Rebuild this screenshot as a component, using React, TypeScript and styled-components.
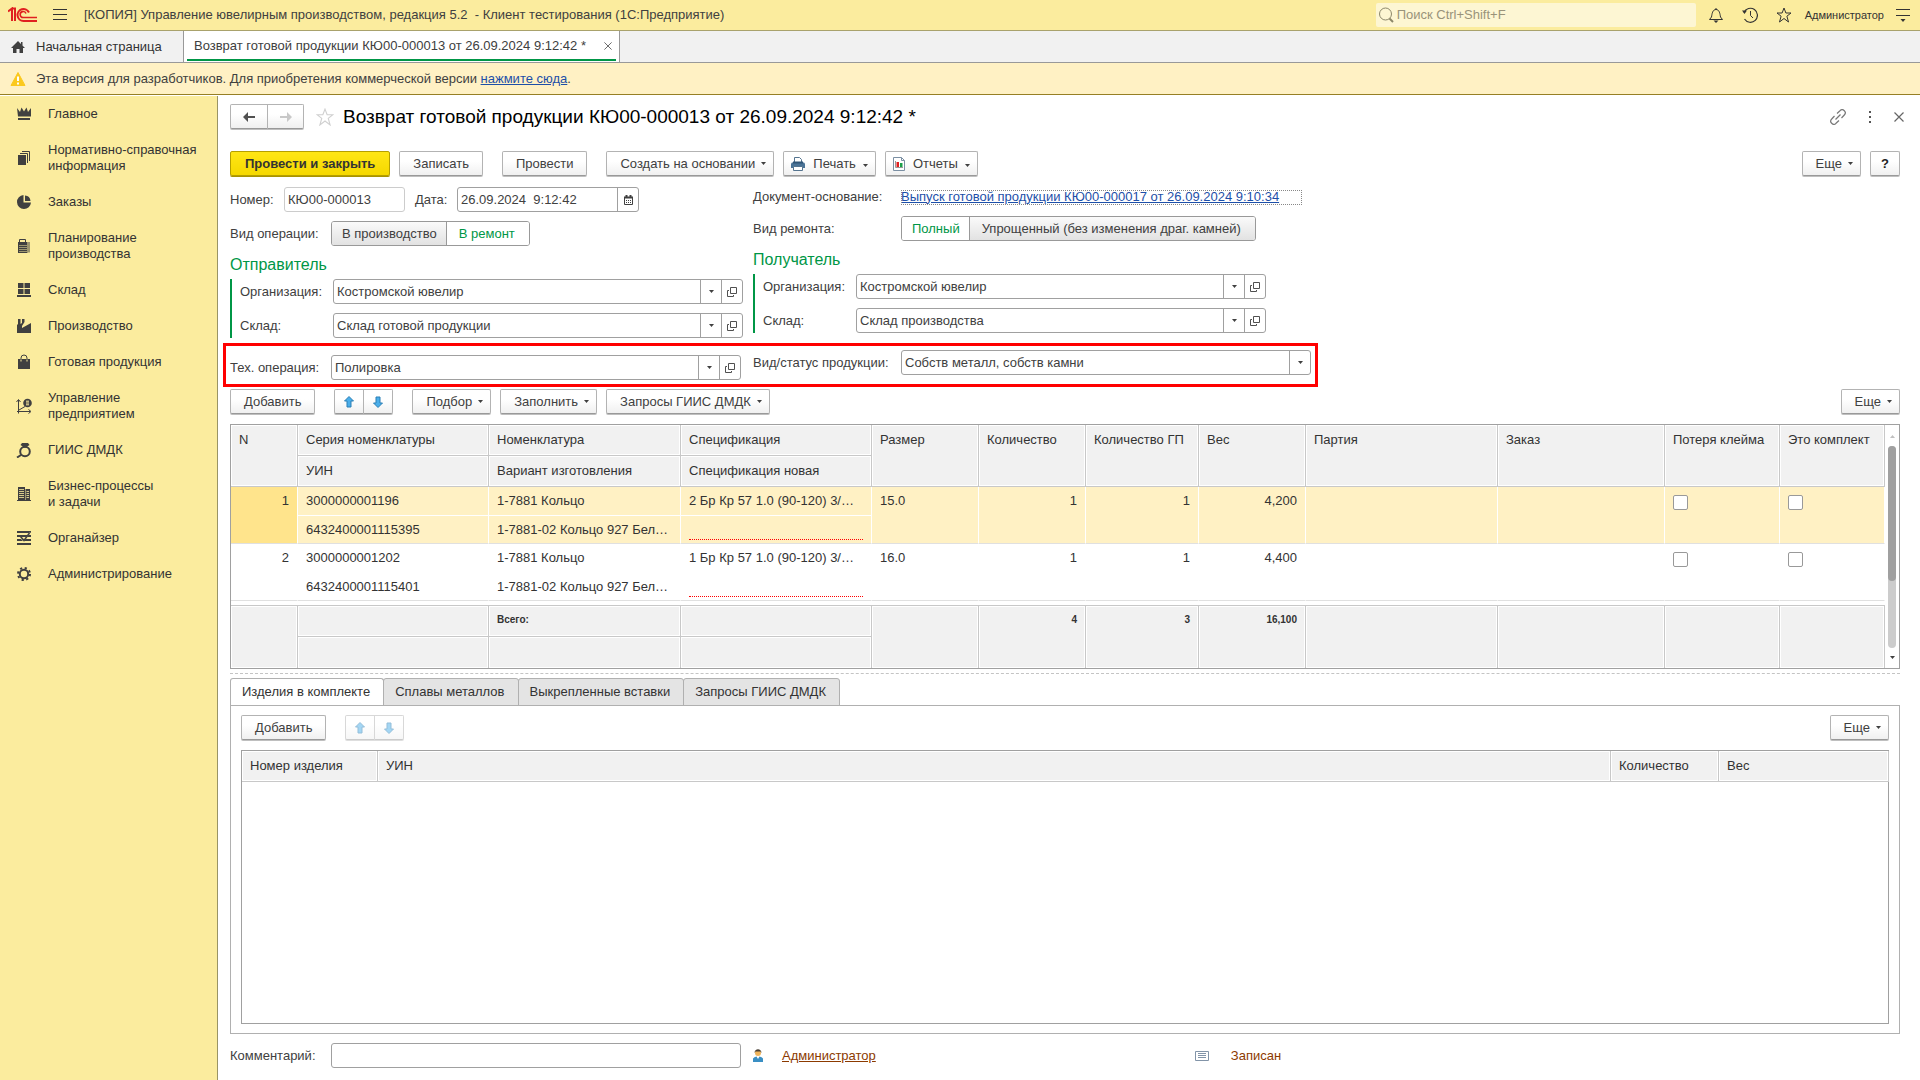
import React from "react";
import styled, { createGlobalStyle, css } from "styled-components";

const GlobalStyle = createGlobalStyle`
  *, *::before, *::after { box-sizing: border-box; }
  body { margin: 0; background: #fff; }
  body, button, input, select {
    font-family: "Liberation Sans", Arial, sans-serif;
    font-size: 13px;
    line-height: 16px;
    color: #404040;
  }
  button { cursor: pointer; }
  svg { display: block; flex: none; }
`;

/* ---------- icons ---------- */

const Logo = () => (
  <svg width="30" height="16" viewBox="0 0 30 16" fill="none" stroke="#e02020" strokeWidth="2">
    <path d="M0 4.500 4 1.500V14M3.500 1.500H7V14" />
    <path d="M21 5.500A6 6 0 1 0 15.500 14H29" />
    <path d="M18 6.500A3 3 0 1 0 15.500 10.500H29" strokeWidth="1.600" />
  </svg>
);

const BurgerIcon = () => (
  <svg width="16" height="14" viewBox="0 0 16 14" stroke="#333" strokeWidth="1">
    <path d="M1 1.500H15M1 6.500H15M1 11.500H15" />
  </svg>
);

const HomeIcon = () => (
  <svg width="16" height="14" viewBox="0 0 16 14" fill="#404040">
    <path d="M8 1 1 8h2v5h3.500V9h3v4H13V8h2L12.500 5.500V2H11v2Z" />
  </svg>
);

const WarningIcon = () => (
  <svg width="16" height="16" viewBox="0 0 16 16">
    <path d="M8 1.500 15 14.500H1Z" fill="#fbc91e" stroke="#fbc91e" strokeLinejoin="round" />
    <path d="M8 5.500V10M8 11.500V13.500" stroke="#fff" strokeWidth="2" />
  </svg>
);

const SearchIcon = () => (
  <svg width="16" height="16" viewBox="0 0 16 16" fill="none" stroke="#8c876a">
    <circle cx="7.500" cy="7" r="6" />
    <path d="M11.500 11.500 15 15" strokeWidth="2" />
  </svg>
);

const BellIcon = () => (
  <svg width="16" height="16" viewBox="0 0 16 16" fill="none" stroke="#333">
    <path d="M1.500 12.500H14.500L12.500 10C12 7 11.500 2.500 8 2.500S4 7 3.500 10Z" />
    <path d="M8 2.500V1" />
    <path d="M5.500 13.500h5L8 16Z" fill="#333" stroke="none" />
  </svg>
);

const HistoryIcon = () => (
  <svg width="16" height="16" viewBox="0 0 16 16" fill="none" stroke="#333">
    <path d="M2 5.500A7 7 0 1 1 2.500 12" strokeWidth="1.200" />
    <path d="M8.500 4V8.500L11 11" />
    <path d="M0 3.500h5L2.500 7Z" fill="#333" stroke="none" />
  </svg>
);

const StarIcon = ({ size = 16, color = "#333" }: { size?: number; color?: string }) => (
  <svg width={size} height={size} viewBox="0 0 16 16" fill="none" stroke={color}>
    <path d="M8 1 9.900 6H15l-4.100 3.200L12.500 15 8 11.500 3.500 15l1.600-5.800L1 6h5.100Z" />
  </svg>
);

const SettingsIcon = () => (
  <svg width="14" height="14" viewBox="0 0 14 14" fill="none" stroke="#333">
    <path d="M0 1.500H14M0 7.500H14" />
    <path d="M4.500 11h5L7 14Z" fill="#333" stroke="none" />
  </svg>
);

const LinkIcon = () => (
  <svg width="16" height="16" viewBox="0 0 16 16" fill="none" stroke="#777" strokeWidth="1.200">
    <path d="M7 4.500 10 1.700A2.900 2.900 0 0 1 14.300 6L11.500 9M9 11.500 6 14.300A2.900 2.900 0 0 1 1.700 10L4.500 7M5.500 10.500l5-5" />
  </svg>
);

const DotsIcon = () => (
  <svg width="4" height="12" viewBox="0 0 4 12" fill="#555">
    <path d="M1 0h2v2H1zM1 5h2v2H1zM1 10h2v2H1z" />
  </svg>
);

const CrossIcon = ({ size = 10 }: { size?: number }) => (
  <svg width={size} height={size} viewBox="0 0 10 10" stroke="#666" strokeWidth="1.200">
    <path d="M0.500 0.500 9.500 9.500M9.500 0.500 0.500 9.500" />
  </svg>
);

const BackIcon = ({ forward }: { forward?: boolean }) => (
  <svg width="14" height="12" viewBox="0 0 14 12" fill={forward ? "#c8c8c8" : "#505050"}>
    <path d={forward ? "M13 6 8 1v4H1v2h7v4Z" : "M1 6 6 1v4h7v2H6v4Z"} />
  </svg>
);

const Caret = ({ color = "#404040" }: { color?: string }) => (
  <svg width="5" height="3" viewBox="0 0 5 3" fill={color}>
    <path d="M0 0h5L2.500 3Z" />
  </svg>
);

const OpenIcon = () => (
  <svg width="10" height="10" viewBox="0 0 10 10" fill="none" stroke="#505050">
    <path d="M3.500 0.500h6v6h-6zM2 3.500H0.500v6h6V8" />
  </svg>
);

const CalendarIcon = () => (
  <svg width="9" height="10" viewBox="0 0 9 10" fill="none" stroke="#404040">
    <path d="M0.500 2V9.500H8.500V2" />
    <path d="M0 2.500H9M2.500 0V2M6.500 0V2" strokeWidth="2" />
    <path d="M2 5.500H7.500M2 7.500H7.500" strokeDasharray="1 1" />
  </svg>
);

const PrinterIcon = () => (
  <svg width="16" height="16" viewBox="0 0 16 16">
    <path d="M4.500 7V1.500h5l2 2V7" fill="#fff" stroke="#55748f" />
    <path d="M1 7.500 2 6.500h12l1 1v4.500H1Z" fill="#4a7396" />
    <path d="M3 5.500h10v2H3Z" fill="#2f5576" />
    <path d="M3.500 10.500h9v4h-9Z" fill="#fff" stroke="#55748f" />
  </svg>
);

const ReportIcon = () => (
  <svg width="14" height="16" viewBox="0 0 14 16">
    <path d="M1.500 1.500h8l3 3v10h-11Z" fill="#fff" stroke="#7b8fa3" />
    <path d="M9.500 1.500v3h3" fill="none" stroke="#7b8fa3" />
    <path d="M3.500 5v6.500h7.500" fill="none" stroke="#999" />
    <path d="M4.500 6h2.500v5H4.500z" fill="#e02020" />
    <path d="M8 7h2.500v4H8z" fill="#1ca04a" />
  </svg>
);

const MoveIcon = ({ down }: { down?: boolean }) => (
  <svg width="12" height="14" viewBox="0 0 12 14" fill="#4aaeea" stroke="#2b7fb5">
    <path d={down ? "M6 12.500 1.500 8h2.500v-6h4v6h2.500Z" : "M6 1.500 10.500 6H8v6H4v-6H1.500Z"} />
  </svg>
);

const PersonIcon = () => (
  <svg width="10" height="13" viewBox="0 0 10 13">
    <circle cx="5" cy="4" r="3" fill="#efb45c" />
    <path d="M1.500 4C1.500-1 8.500-1 8.500 4L7.500 2.500h-5Z" fill="#4a4034" />
    <path d="M0 13V9.500Q1 8 3.500 7.500L5 10l1.500-2.500Q9 8 10 9.500V13Z" fill="#3a8fc4" />
  </svg>
);

const StatusIcon = () => (
  <svg width="14" height="10" viewBox="0 0 14 10" fill="#fff" stroke="#8294a8">
    <path d="M0.500 0.500h13v9h-13z" />
    <path d="M3 2.500h8M3 4.500h8M3 6.500h8" />
  </svg>
);

const menuIcons: Record<string, React.ReactNode> = {
  crown: <path d="M1 2 4 6 5.500 1.500 8 5.500 10.500 1.500 12 6 15 2V10.500H2ZM2 12h12v2H2Z" />,
  books: (
    <>
      <path d="M2 5h8v10H2Z" />
      <path d="M4 3.500h7.500V13M6 1.500h7.500V11" fill="none" stroke="#404040" />
    </>
  ),
  pie: <path d="M7.500 1V8.500H15A7 7 0 1 1 7.500 1ZM9 1.500A6 6 0 0 1 14.500 7H9Z" />,
  calc: (
    <>
      <path d="M3.500 5V1.500h6V5" fill="none" stroke="#404040" />
      <path d="M2 4h9.500v11H2Z" />
      <path d="M3.500 7.500h7M3.500 9.500h7M3.500 11.500h7M3.500 13.500h7" stroke="#fbec9f" strokeDasharray="1 1" />
      <path d="M13 4v10.500" stroke="#404040" />
    </>
  ),
  boxes: <path d="M2 1h5.500v5H2ZM8.500 1H14v5H8.500ZM2 7h5.500v5H2ZM8.500 7H14v5H8.500ZM1 13h14v2H1Z" />,
  factory: <path d="M1 15V7L2 6V1h2.500v5L6 5V1h2.500v3L6 8v2l9-5v10Z" />,
  bag: (
    <>
      <path d="M2 5h12v10H2Z" />
      <path d="M5 8V4a3 3 0 0 1 6 0v4" fill="none" stroke="#404040" />
      <path d="M5 5.500v2M11 5.500v2" stroke="#fbec9f" />
    </>
  ),
  chart: (
    <>
      <path d="M2.500 15.500V2M1 13.500H14M0.500 4 2.500 1.500 4.500 4M12.500 11.500 15 13.500 12.500 15.500M3 12 9 8.500" fill="none" stroke="#404040" />
      <circle cx="11.500" cy="5" r="4.300" />
      <path d="M10 3.200h3M10 5h3M10 6.800h3" stroke="#fbec9f" />
    </>
  ),
  ring: (
    <>
      <circle cx="9" cy="9.500" r="4.800" fill="none" stroke="#404040" strokeWidth="2" />
      <path d="M6 1h6l1.500 2-4.500 3-4.500-3Z" />
      <path d="M5 13 1 15.500" stroke="#404040" strokeWidth="2" />
    </>
  ),
  building: (
    <>
      <path d="M2 1h7v14H2ZM9.500 3H14v12H9.500ZM1 14h14v1H1Z" />
      <path d="M3 3.500h5M3 5.500h5M3 7.500h5M3 9.500h5M3 11.500h5M10.500 5.500h2.500M10.500 7.500h2.500M10.500 9.500h2.500M10.500 11.500h2.500" stroke="#fbec9f" strokeWidth="0.800" />
    </>
  ),
  organizer: (
    <>
      <path d="M1 1h14v2H1ZM1 5h14v2H1ZM1 9h14v2H1ZM1 13h14v2H1Z" />
      <path d="M4 7.500 7.500 11 14 2.500" fill="none" stroke="#fbec9f" />
      <path d="M4.500 6.500 8 10.500 13.500 3" fill="none" stroke="#404040" strokeWidth="1.500" />
    </>
  ),
  gear: (
    <>
      <circle cx="8" cy="8" r="4.200" fill="none" stroke="#404040" strokeWidth="2" />
      <circle cx="8" cy="8" r="6" fill="none" stroke="#404040" strokeWidth="2" strokeDasharray="2.200 2.510" />
    </>
  ),
};

/* ---------- shell ---------- */

const Shell = styled.div`
  display: flex;
  flex-direction: column;
  min-height: 100vh;
  background: #fff;
`;

const TopBar = styled.header`
  display: flex;
  align-items: center;
  height: 31px;
  padding: 0 10px 0 8px;
  background: #fbec9e;
  border-bottom: 1px solid #a9a26c;
`;

const PlainButton = styled.button`
  display: flex;
  align-items: center;
  justify-content: center;
  padding: 0;
  border: 0;
  background: none;
  color: #333;
`;

const BurgerButton = styled(PlainButton)`
  margin: 0 16px 0 14px;
`;

const AppTitle = styled.div`
  flex: 1;
  white-space: pre;
  color: #404040;
`;

const SearchBox = styled.label`
  display: flex;
  align-items: center;
  gap: 3px;
  width: 320px;
  height: 24px;
  padding-left: 2px;
  margin-right: 12px;
  background: #fdf6d3;
  border-radius: 2px;
`;

const SearchInput = styled.input`
  flex: 1;
  min-width: 0;
  border: 0;
  padding: 0;
  outline: 0;
  background: none;
  &::placeholder { color: #99937a; opacity: 1; }
`;

const TopIcons = styled.div`
  display: flex;
  gap: 18px;
  margin-right: 13px;
`;

const UserButton = styled(PlainButton)`
  font-size: 11px;
  margin-right: 12px;
`;

const TabBar = styled.nav`
  display: flex;
  height: 32px;
  background: #f1f1f1;
  border-bottom: 1px solid #999;
`;

const HomeTab = styled.a`
  display: flex;
  align-items: center;
  gap: 10px;
  width: 184px;
  padding-left: 10px;
  border-right: 1px solid #999;
  color: #333;
  text-decoration: none;
`;

const OpenTab = styled.div`
  display: flex;
  width: 436px;
  padding: 0 3px 1px 3px;
  border-right: 1px solid #999;
  background: #fff;
`;

const OpenTabInner = styled.div`
  display: flex;
  flex: 1;
  align-items: center;
  justify-content: space-between;
  padding: 2px 4px 0 7px;
  border-bottom: 2px solid #009646;
`;

const Notice = styled.div`
  display: flex;
  align-items: center;
  gap: 10px;
  height: 32px;
  padding-left: 10px;
  background: #fff1c4;
  border-bottom: 1px solid #967f24;
`;

const Link = styled.a`
  color: #1d4fa8;
`;

const Body = styled.div`
  display: flex;
  flex: 1;
  padding-top: 1px;
`;

const Sidebar = styled.nav`
  width: 218px;
  flex: none;
  background: #fbec9e;
  border-right: 1px solid #999465;
`;

const SidebarItem = styled.a`
  display: flex;
  align-items: center;
  gap: 16px;
  padding: 10px 8px 10px 16px;
  color: #333;
  text-decoration: none;
  white-space: pre-line;
`;

const Main = styled.main`
  display: flex;
  flex-direction: column;
  flex: 1;
  min-width: 0;
  padding: 9px 20px 12px 12px;
`;

/* ---------- buttons ---------- */

const Row = styled.div`
  display: flex;
  align-items: center;
  gap: 9px;
`;

const Spacer = styled.div`
  flex: 1;
`;

const Group = styled.div`
  display: flex;
  gap: 9px;
  margin-left: 10px;
`;

const raised = css`
  border: 1px solid #b3b3b3;
  border-bottom-color: #999;
  background: linear-gradient(#fff 40%, #f0f0f0);
  box-shadow: 0 1px 0 #bfbfbf;
`;

const Button = styled.button<{ $primary?: boolean; $menu?: boolean; $icon?: boolean }>`
  ${raised}
  display: flex;
  align-items: center;
  justify-content: center;
  gap: ${(p) => (p.$icon ? 7 : 6)}px;
  height: 25px;
  margin-bottom: 1px;
  padding: 0 ${(p) => (p.$menu ? 7 : 13)}px 0 ${(p) => (p.$icon ? 6 : 13)}px;
  border-radius: 2px;
  white-space: nowrap;
  ${(p) =>
    p.$primary &&
    css`
      padding: 0 14px;
      border-color: #b59f00;
      background: linear-gradient(#ffe615, #f5d800);
      box-shadow: 0 1px 0 #a89300;
      font-weight: bold;
      color: #333;
    `}
  & > svg:last-child:not(:only-child) { margin-top: 3px; }
`;

const HelpButton = styled(Button)`
  width: 30px;
  padding: 0;
  font-weight: bold;
  color: #222;
`;

const PairButton = styled.button<{ $width: number }>`
  ${raised}
  display: flex;
  align-items: center;
  justify-content: center;
  width: ${(p) => p.$width}px;
  height: 25px;
  margin-bottom: 1px;
  padding: 0;
  &:first-child { border-radius: 2px 0 0 2px; }
  &:last-child { border-radius: 0 2px 2px 0; }
  &:not(:first-child) { margin-left: -1px; }
`;

const Pair = styled.div<{ $faded?: boolean }>`
  display: flex;
  margin-left: 10px;
  opacity: ${(p) => (p.$faded ? 0.5 : 1)};
`;

const HeaderPair = styled.div`
  display: flex;
  margin-right: 3px;
`;

const HeaderRow = styled(Row)`
  height: 24px;
`;

const Title = styled.h1`
  margin: 0;
  font-size: 19px;
  line-height: 24px;
  font-weight: normal;
  color: #000;
`;

const WindowTools = styled.div`
  display: flex;
  align-items: center;
  gap: 22px;
  margin-right: -4px;
`;

const CommandBar = styled(Row)`
  margin: 22px 0 10px;
`;

/* ---------- form ---------- */

const FormArea = styled.div`
  position: relative;
  display: flex;
  align-items: flex-start;
  gap: 10px;
  width: fit-content;
`;

const Highlight = styled.div`
  position: absolute;
  left: -7px;
  right: -7px;
  bottom: -7px;
  height: 44px;
  border: 3px solid #f00;
  pointer-events: none;
`;

const Column = styled.div<{ $width: number }>`
  display: flex;
  flex-direction: column;
  width: ${(p) => p.$width}px;
`;

const FieldRow = styled.div<{ $height?: number }>`
  display: flex;
  align-items: center;
  height: ${(p) => p.$height ?? 25}px;
  & + & { margin-top: 9px; }
`;

const Label = styled.label<{ $width: number; $after?: boolean }>`
  width: ${(p) => p.$width}px;
  margin-left: ${(p) => (p.$after ? 10 : 0)}px;
  flex: none;
  white-space: nowrap;
`;

const Caption = styled.span<{ $width: number }>`
  width: ${(p) => p.$width}px;
  flex: none;
  white-space: nowrap;
`;

const Box = styled.div<{ $width?: number; $muted?: boolean }>`
  display: flex;
  ${(p) => (p.$width ? `width: ${p.$width}px;` : "flex: 1;")}
  height: 25px;
  border: 1px solid ${(p) => (p.$muted ? "#ccc" : "#a0a0a0")};
  border-radius: 3px;
  background: #fff;
`;

const BoxInput = styled.input`
  flex: 1;
  min-width: 0;
  padding: 0 4px 0 3px;
  border: 0;
  outline: 0;
  background: none;
`;

const BoxButton = styled.button`
  display: flex;
  align-items: center;
  justify-content: center;
  width: 21px;
  padding: 0;
  border: 0;
  border-left: 1px solid #a0a0a0;
  background: none;
`;

const SelectWrap = styled.div`
  flex: 1;
  display: grid;
  & > * { grid-area: 1 / 1; }
`;

const Select = styled.select`
  appearance: none;
  min-width: 0;
  border: 0;
  outline: 0;
  padding: 0 24px 0 3px;
  background: none;
`;

const SelectCaret = styled.span`
  display: flex;
  align-items: center;
  justify-content: center;
  justify-self: end;
  width: 21px;
  border-left: 1px solid #a0a0a0;
  pointer-events: none;
`;

const Segments = styled.div`
  display: flex;
  height: 25px;
  border: 1px solid #999;
  border-radius: 3px;
  overflow: hidden;
`;

const Segment = styled.label`
  position: relative;
  display: flex;
  align-items: center;
  padding: 0 9px 0 10px;
  background: linear-gradient(#fafafa, #e2e2e2);
  &:has(input:checked) { background: #fff; color: #009646; }
  & + & {
    padding: 0 14px 0 12px;
    border-left: 1px solid #999;
  }
`;

const SegmentRadio = styled.input`
  position: absolute;
  inset: 0;
  margin: 0;
  opacity: 0;
`;

const GroupTitle = styled.h2`
  margin: 0;
  padding-top: 4px;
  height: 33px;
  font-size: 16px;
  line-height: 29px;
  font-weight: normal;
  color: #009646;
`;

const Party = styled.div`
  margin-bottom: 17px;
  padding-left: 8px;
  border-left: 2px solid #009646;
`;

const DocLink = styled(Link)`
  width: 401px;
  height: 15px;
  line-height: 14px;
  outline: 1px dotted #888;
  outline-offset: -1px;
`;

const ListBar = styled(Row)`
  margin: 9px 0;
`;

/* ---------- tables ---------- */

const TableFrame = styled.div`
  display: flex;
  border: 1px solid #a0a0a0;
`;

const Table = styled.table`
  flex: 1;
  width: 100%;
  table-layout: fixed;
  border-collapse: separate;
  border-spacing: 0;
  color: #333;
`;

const HeadCell = styled.th`
  height: 31px;
  padding: 0 8px;
  vertical-align: top;
  text-align: left;
  font-weight: normal;
  line-height: 29px;
  white-space: nowrap;
  background: #f1f1f1;
  border-right: 1px solid #c8c8c8;
  border-bottom: 1px solid #c8c8c8;
  box-shadow: inset 0 0 0 1px #fff;
`;

const Cell = styled.td<{ $active?: boolean; $key?: boolean; $right?: boolean; $first?: boolean }>`
  height: ${(p) => (p.$first ? 29 : 28)}px;
  padding: 1px 8px 0;
  vertical-align: top;
  overflow: hidden;
  text-overflow: ellipsis;
  white-space: nowrap;
  line-height: 26px;
  text-align: ${(p) => (p.$right ? "right" : "left")};
  background: ${(p) => (p.$active ? (p.$key ? "#ffe48c" : "#fff1c4") : "#fff")};
  border-right: 1px solid #fff;
  border-bottom: 1px solid ${(p) => (p.$first ? "#fff" : "#e0e0e0")};
`;

const GapCell = styled.td`
  height: 5px;
  padding: 0;
  border-bottom: 1px solid #c8c8c8;
`;

const FootCell = styled(HeadCell).attrs({ as: "td" })<{ $right?: boolean }>`
  font-size: 10px;
  font-weight: bold;
  line-height: 27px;
  text-align: ${(p) => (p.$right ? "right" : "left")};
  tr:last-child > &, &[rowspan] { border-bottom: 0; }
`;

const Required = styled.div`
  height: 23px;
  border-bottom: 1px dotted #f00;
`;

const Check = styled.input`
  display: block;
  appearance: none;
  width: 15px;
  height: 15px;
  margin: 7px 0 0;
  border: 1px solid #999;
  border-radius: 2px;
  background: #fff;
`;

const ScrollBar = styled.div`
  display: flex;
  flex-direction: column;
  align-items: center;
  width: 14px;
  padding: 10px 0 9px;
  gap: 8px;
`;

const ScrollTrack = styled.div`
  flex: 1;
  width: 8px;
  border-radius: 4px;
  background: #ccc;
`;

const ScrollThumb = styled.div`
  height: 67%;
  border-radius: 4px;
  background: #a0a0a0;
`;

const FlipUp = styled.span`
  transform: rotate(180deg);
`;

const Splitter = styled.div`
  margin: 4px 0;
  border-top: 1px dashed #c4c4c4;
`;

const Tabs = styled.div`
  display: flex;
  height: 28px;
  margin-bottom: -1px;
`;

const Tab = styled.button<{ $active?: boolean }>`
  padding: 0 13px 0 11px;
  border: 1px solid #b0b0b0;
  border-radius: 3px 3px 0 0;
  background: #e4e4e4;
  color: #333;
  & + & { margin-left: -1px; }
  ${(p) =>
    p.$active &&
    css`
      background: #fff;
      border-bottom-color: #fff;
    `}
`;

const TabPanel = styled.section`
  display: flex;
  flex-direction: column;
  flex: 1;
  padding: 9px 10px 9px;
  border: 1px solid #b0b0b0;
`;

const PanelFrame = styled(TableFrame)`
  flex: 1;
  align-items: flex-start;
  margin-top: 9px;
`;

const Footer = styled.footer`
  display: flex;
  align-items: center;
  margin-top: 9px;
`;

const FooterItem = styled.div<{ $gap: number; $left: number }>`
  display: flex;
  align-items: center;
  gap: ${(p) => p.$gap}px;
  margin-left: ${(p) => p.$left}px;
  color: #8c3a00;
`;

const UserLink = styled.a`
  color: #8c3a00;
`;

/* ---------- data ---------- */

const menu: [string, string][] = [
  ["crown", "Главное"],
  ["books", "Нормативно-справочная\nинформация"],
  ["pie", "Заказы"],
  ["calc", "Планирование\nпроизводства"],
  ["boxes", "Склад"],
  ["factory", "Производство"],
  ["bag", "Готовая продукция"],
  ["chart", "Управление\nпредприятием"],
  ["ring", "ГИИС ДМДК"],
  ["building", "Бизнес-процессы\nи задачи"],
  ["organizer", "Органайзер"],
  ["gear", "Администрирование"],
];

const columns = [67, 191, 192, 191, 107, 107, 113, 107, 192, 167, 115, 105];
const kitColumns = [136, 1233, 108, 170];

const items = [
  { n: 1, series: "3000000001196", uin: "6432400001115395", spec: "2 Бр Кр 57 1.0 (90-120) 3/…", size: "15.0", weight: "4,200", active: true },
  { n: 2, series: "3000000001202", uin: "6432400001115401", spec: "1 Бр Кр 57 1.0 (90-120) 3/…", size: "16.0", weight: "4,400", active: false },
];

/* ---------- composed parts ---------- */

const MenuButton = ({ icon, children }: { icon?: React.ReactNode; children: React.ReactNode }) => (
  <Button type="button" $menu $icon={!!icon}>
    {icon}
    {children}
    <Caret />
  </Button>
);

const MoveButtons = ({ faded }: { faded?: boolean }) => (
  <Pair $faded={faded}>
    <PairButton type="button" $width={30} aria-label="Переместить вверх" disabled={faded}>
      <MoveIcon />
    </PairButton>
    <PairButton type="button" $width={30} aria-label="Переместить вниз" disabled={faded}>
      <MoveIcon down />
    </PairButton>
  </Pair>
);

const SelectField = ({ id, value, open = true, width }: { id: string; value: string; open?: boolean; width?: number }) => (
  <Box $width={width}>
    <SelectWrap>
      <Select id={id} defaultValue={value}>
        <option>{value}</option>
      </Select>
      <SelectCaret>
        <Caret />
      </SelectCaret>
    </SelectWrap>
    {open && (
      <BoxButton type="button" aria-label="Открыть">
        <OpenIcon />
      </BoxButton>
    )}
  </Box>
);

const SegmentedField = ({ name, options, selected }: { name: string; options: string[]; selected: string }) => (
  <Segments role="radiogroup">
    {options.map((o) => (
      <Segment key={o}>
        <SegmentRadio type="radio" name={name} defaultChecked={o === selected} />
        {o}
      </Segment>
    ))}
  </Segments>
);

const PartyFields = ({ id, store }: { id: string; store: string }) => (
  <Party>
    <FieldRow>
      <Label $width={93} htmlFor={`${id}-org`}>Организация:</Label>
      <SelectField id={`${id}-org`} value="Костромской ювелир" width={410} />
    </FieldRow>
    <FieldRow>
      <Label $width={93} htmlFor={`${id}-store`}>Склад:</Label>
      <SelectField id={`${id}-store`} value={store} width={410} />
    </FieldRow>
  </Party>
);

const ItemsTable = () => (
  <TableFrame>
    <Table>
      <colgroup>
        {columns.map((w, i) => (
          <col key={i} style={{ width: w }} />
        ))}
      </colgroup>
      <thead>
        <tr>
          <HeadCell rowSpan={2}>N</HeadCell>
          <HeadCell>Серия номенклатуры</HeadCell>
          <HeadCell>Номенклатура</HeadCell>
          <HeadCell>Спецификация</HeadCell>
          {["Размер", "Количество", "Количество ГП", "Вес", "Партия", "Заказ", "Потеря клейма", "Это комплект"].map((t) => (
            <HeadCell key={t} rowSpan={2}>{t}</HeadCell>
          ))}
        </tr>
        <tr>
          <HeadCell>УИН</HeadCell>
          <HeadCell>Вариант изготовления</HeadCell>
          <HeadCell>Спецификация новая</HeadCell>
        </tr>
      </thead>
      <tbody>
        {items.map((r) => (
          <React.Fragment key={r.n}>
            <tr>
              <Cell rowSpan={2} $active={r.active} $key $right>{r.n}</Cell>
              <Cell $first $active={r.active}>{r.series}</Cell>
              <Cell $first $active={r.active}>1-7881 Кольцо</Cell>
              <Cell $first $active={r.active}>{r.spec}</Cell>
              <Cell rowSpan={2} $active={r.active}>{r.size}</Cell>
              <Cell rowSpan={2} $active={r.active} $right>1</Cell>
              <Cell rowSpan={2} $active={r.active} $right>1</Cell>
              <Cell rowSpan={2} $active={r.active} $right>{r.weight}</Cell>
              <Cell rowSpan={2} $active={r.active} />
              <Cell rowSpan={2} $active={r.active} />
              <Cell rowSpan={2} $active={r.active}>
                <Check type="checkbox" aria-label="Потеря клейма" />
              </Cell>
              <Cell rowSpan={2} $active={r.active}>
                <Check type="checkbox" aria-label="Это комплект" />
              </Cell>
            </tr>
            <tr>
              <Cell $active={r.active}>{r.uin}</Cell>
              <Cell $active={r.active}>1-7881-02 Кольцо 927 Бел…</Cell>
              <Cell $active={r.active}>
                <Required />
              </Cell>
            </tr>
          </React.Fragment>
        ))}
        <tr>
          <GapCell colSpan={12} />
        </tr>
      </tbody>
      <tfoot>
        <tr>
          <FootCell rowSpan={2} />
          <FootCell />
          <FootCell>Всего:</FootCell>
          <FootCell />
          <FootCell rowSpan={2} />
          <FootCell rowSpan={2} $right>4</FootCell>
          <FootCell rowSpan={2} $right>3</FootCell>
          <FootCell rowSpan={2} $right>16,100</FootCell>
          <FootCell rowSpan={2} />
          <FootCell rowSpan={2} />
          <FootCell rowSpan={2} />
          <FootCell rowSpan={2} />
        </tr>
        <tr>
          <FootCell />
          <FootCell />
          <FootCell />
        </tr>
      </tfoot>
    </Table>
    <ScrollBar>
      <FlipUp>
        <Caret color="#c0c0c0" />
      </FlipUp>
      <ScrollTrack>
        <ScrollThumb />
      </ScrollTrack>
      <Caret />
    </ScrollBar>
  </TableFrame>
);

export default function App() {
  return (
    <Shell>
      <GlobalStyle />
      <TopBar>
        <Logo />
        <BurgerButton type="button" aria-label="Меню">
          <BurgerIcon />
        </BurgerButton>
        <AppTitle>{"[КОПИЯ] Управление ювелирным производством, редакция 5.2  - Клиент тестирования (1С:Предприятие)"}</AppTitle>
        <SearchBox>
          <SearchIcon />
          <SearchInput type="search" placeholder="Поиск Ctrl+Shift+F" />
        </SearchBox>
        <TopIcons>
          <PlainButton type="button" aria-label="Уведомления"><BellIcon /></PlainButton>
          <PlainButton type="button" aria-label="История"><HistoryIcon /></PlainButton>
          <PlainButton type="button" aria-label="Избранное"><StarIcon /></PlainButton>
        </TopIcons>
        <UserButton type="button">Администратор</UserButton>
        <PlainButton type="button" aria-label="Настройки"><SettingsIcon /></PlainButton>
      </TopBar>

      <TabBar>
        <HomeTab href="#home">
          <HomeIcon />
          Начальная страница
        </HomeTab>
        <OpenTab>
          <OpenTabInner>
            Возврат готовой продукции КЮ00-000013 от 26.09.2024 9:12:42 *
            <PlainButton type="button" aria-label="Закрыть вкладку"><CrossIcon size={8} /></PlainButton>
          </OpenTabInner>
        </OpenTab>
      </TabBar>

      <Notice>
        <WarningIcon />
        <span>
          Эта версия для разработчиков. Для приобретения коммерческой версии <Link href="#buy">нажмите сюда</Link>.
        </span>
      </Notice>

      <Body>
        <Sidebar>
          {menu.map(([icon, text]) => (
            <SidebarItem key={icon} href={`#${icon}`}>
              <svg width="16" height="16" viewBox="0 0 16 16" fill="#404040">{menuIcons[icon]}</svg>
              {text}
            </SidebarItem>
          ))}
        </Sidebar>

        <Main>
          <HeaderRow>
            <HeaderPair>
              <PairButton type="button" $width={38} aria-label="Назад"><BackIcon /></PairButton>
              <PairButton type="button" $width={37} aria-label="Вперед" disabled><BackIcon forward /></PairButton>
            </HeaderPair>
            <PlainButton type="button" aria-label="В избранное"><StarIcon size={18} color="#d0d0d0" /></PlainButton>
            <Title>Возврат готовой продукции КЮ00-000013 от 26.09.2024 9:12:42 *</Title>
            <Spacer />
            <WindowTools>
              <PlainButton type="button" aria-label="Получить ссылку"><LinkIcon /></PlainButton>
              <PlainButton type="button" aria-label="Еще действия"><DotsIcon /></PlainButton>
              <PlainButton type="button" aria-label="Закрыть"><CrossIcon /></PlainButton>
            </WindowTools>
          </HeaderRow>

          <CommandBar>
            <Button type="button" $primary>Провести и закрыть</Button>
            <Button type="button">Записать</Button>
            <Group><Button type="button">Провести</Button></Group>
            <Group>
              <MenuButton>Создать на основании</MenuButton>
              <MenuButton icon={<PrinterIcon />}>Печать</MenuButton>
              <MenuButton icon={<ReportIcon />}>Отчеты</MenuButton>
            </Group>
            <Spacer />
            <MenuButton>Еще</MenuButton>
            <HelpButton type="button">?</HelpButton>
          </CommandBar>

          <FormArea>
            <Column $width={513}>
              <FieldRow>
                <Label $width={54} htmlFor="number">Номер:</Label>
                <Box $width={121} $muted>
                  <BoxInput id="number" defaultValue="КЮ00-000013" />
                </Box>
                <Label $width={42} $after htmlFor="date">Дата:</Label>
                <Box $width={182}>
                  <BoxInput id="date" defaultValue="26.09.2024  9:12:42" />
                  <BoxButton type="button" aria-label="Выбрать дату"><CalendarIcon /></BoxButton>
                </Box>
              </FieldRow>
              <FieldRow>
                <Caption $width={101}>Вид операции:</Caption>
                <SegmentedField name="operation" options={["В производство", "В ремонт"]} selected="В ремонт" />
              </FieldRow>
              <GroupTitle>Отправитель</GroupTitle>
              <PartyFields id="sender" store="Склад готовой продукции" />
              <FieldRow>
                <Label $width={101} htmlFor="tech">Тех. операция:</Label>
                <SelectField id="tech" value="Полировка" width={410} />
              </FieldRow>
            </Column>
            <Column $width={558}>
              <FieldRow $height={20}>
                <Caption $width={148}>Документ-основание:</Caption>
                <DocLink href="#doc">Выпуск готовой продукции КЮ00-000017 от 26.09.2024 9:10:34</DocLink>
              </FieldRow>
              <FieldRow>
                <Caption $width={148}>Вид ремонта:</Caption>
                <SegmentedField name="repair" options={["Полный", "Упрощенный (без изменения драг. камней)"]} selected="Полный" />
              </FieldRow>
              <GroupTitle>Получатель</GroupTitle>
              <PartyFields id="receiver" store="Склад производства" />
              <FieldRow>
                <Label $width={148} htmlFor="status">Вид/статус продукции:</Label>
                <SelectField id="status" value="Собств металл, собств камни" open={false} width={410} />
              </FieldRow>
            </Column>
            <Highlight />
          </FormArea>

          <ListBar>
            <Button type="button">Добавить</Button>
            <MoveButtons />
            <Group>
              <MenuButton>Подбор</MenuButton>
              <MenuButton>Заполнить</MenuButton>
              <MenuButton>Запросы ГИИС ДМДК</MenuButton>
            </Group>
            <Spacer />
            <MenuButton>Еще</MenuButton>
          </ListBar>

          <ItemsTable />
          <Splitter />

          <Tabs role="tablist">
            <Tab type="button" role="tab" $active aria-selected>Изделия в комплекте</Tab>
            <Tab type="button" role="tab">Сплавы металлов</Tab>
            <Tab type="button" role="tab">Выкрепленные вставки</Tab>
            <Tab type="button" role="tab">Запросы ГИИС ДМДК</Tab>
          </Tabs>
          <TabPanel>
            <Row>
              <Button type="button">Добавить</Button>
              <MoveButtons faded />
              <Spacer />
              <MenuButton>Еще</MenuButton>
            </Row>
            <PanelFrame>
              <Table>
                <colgroup>
                  {kitColumns.map((w, i) => (
                    <col key={i} style={{ width: w }} />
                  ))}
                </colgroup>
                <thead>
                  <tr>
                    <HeadCell>Номер изделия</HeadCell>
                    <HeadCell>УИН</HeadCell>
                    <HeadCell>Количество</HeadCell>
                    <HeadCell>Вес</HeadCell>
                  </tr>
                </thead>
              </Table>
            </PanelFrame>
          </TabPanel>

          <Footer>
            <Label $width={101} htmlFor="comment">Комментарий:</Label>
            <Box $width={410}>
              <BoxInput id="comment" />
            </Box>
            <FooterItem $gap={19} $left={12}>
              <PersonIcon />
              <UserLink href="#user">Администратор</UserLink>
            </FooterItem>
            <FooterItem $gap={22} $left={319}>
              <StatusIcon />
              <span>Записан</span>
            </FooterItem>
          </Footer>
        </Main>
      </Body>
    </Shell>
  );
}
